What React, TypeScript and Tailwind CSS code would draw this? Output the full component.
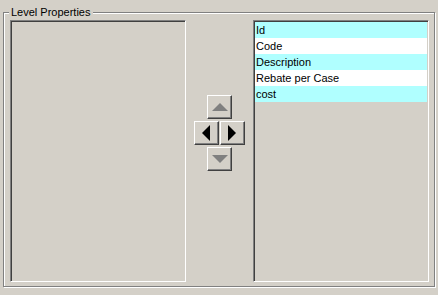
import React from 'react';

const fields = ['Id', 'Code', 'Description', 'Rebate per Case', 'cost'];

const ArrowButton: React.FC<{ dir: 'up' | 'down' | 'left' | 'right'; disabled?: boolean }> = ({ dir, disabled }) => {
  const pts: Record<string, string> = {
    up: '3,8 11,0 19,8',
    down: '3,0 11,8 19,0',
    left: '7,11 15,3 15,19',
    right: '7,3 15,11 7,19',
  };
  const vertical = dir === 'up' || dir === 'down';
  return (
    <button
      disabled={disabled}
      className="w-[25px] h-[24px] flex items-center justify-center bg-[#d4d0c8] border border-t-white border-l-white border-b-[#404040] border-r-[#404040] shadow-[inset_-1px_-1px_0_#808080]"
    >
      <svg width="22" height={vertical ? 9 : 22} viewBox={vertical ? '0 0 22 9' : '0 0 22 22'}>
        <polygon points={pts[dir]} fill={disabled ? '#808080' : '#000'} />
      </svg>
    </button>
  );
};

export default function App() {
  return (
    <div
      className="w-[438px] h-[295px] bg-[#d4d0c8] pt-[12px] pl-[3px] pr-[3px] pb-[8px]"
      style={{ fontFamily: '"Liberation Sans", Arial, sans-serif' }}
    >
      <div className="relative h-full border border-[#808080] shadow-[inset_1px_1px_0_#fff,1px_1px_0_#fff] pl-[6px] pr-[5px] pt-[7px] pb-[4px] flex">
        <span className="absolute left-[5px] top-[-8px] px-[2px] bg-[#d4d0c8] text-[11px] leading-[14px] text-black">
          Level Properties
        </span>

        <div className="w-[176px] h-full border border-t-[#808080] border-l-[#808080] border-b-white border-r-white shadow-[inset_1px_1px_0_#404040,inset_-1px_-1px_0_#d4d0c8]" />

        <div className="w-[67px] flex flex-col items-center pt-[75px] gap-[2px]">
          <ArrowButton dir="up" disabled />
          <div className="flex gap-[1px] -ml-[1px]">
            <ArrowButton dir="left" />
            <ArrowButton dir="right" />
          </div>
          <ArrowButton dir="down" disabled />
        </div>

        <div className="w-[176px] h-full border border-t-[#808080] border-l-[#808080] border-b-white border-r-white shadow-[inset_1px_1px_0_#404040,inset_-1px_-1px_0_#d4d0c8] p-[1px]">
          <ul>
            {fields.map((f, i) => (
              <li
                key={f}
                className={`h-[16px] pl-[1px] text-[11px] leading-[16px] text-black ${i % 2 === 0 ? 'bg-[#b0ffff]' : 'bg-white'}`}
              >
                {f}
              </li>
            ))}
          </ul>
        </div>
      </div>
    </div>
  );
}
